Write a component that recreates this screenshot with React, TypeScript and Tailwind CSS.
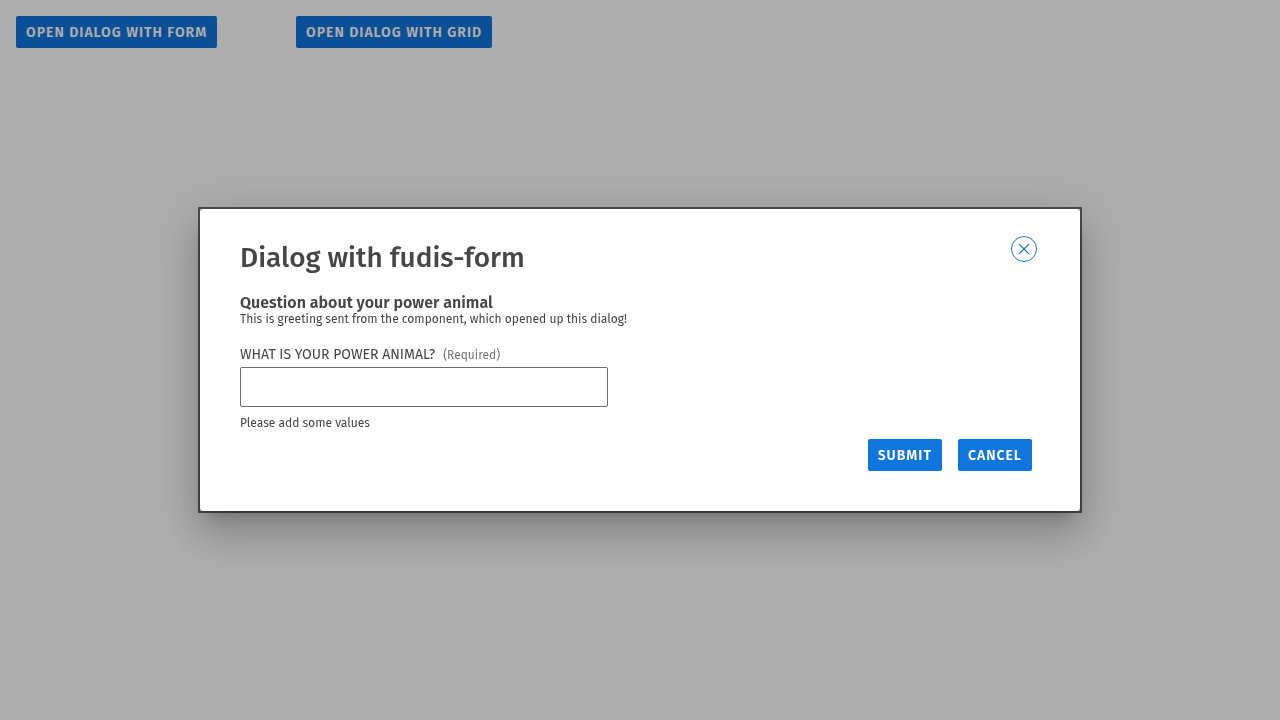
import type { ReactNode } from 'react';

function Button({ children, type = 'button' }: { children: ReactNode; type?: 'button' | 'submit' }) {
  return (
    <button
      type={type}
      className="h-8 rounded-[2px] bg-[#1175de] px-2.5 pt-0.5 text-sm font-semibold tracking-[1px] text-white uppercase"
    >
      {children}
    </button>
  );
}

function CloseIcon() {
  return (
    <svg viewBox="0 0 12 12" className="size-3" fill="none" stroke="currentColor" strokeWidth="1.3" strokeLinecap="round" aria-hidden="true">
      <path d="M1.4 1.4 10.6 10.6M10.6 1.4 1.4 10.6" />
    </svg>
  );
}

function FormDialog() {
  return (
    <div role="dialog" aria-modal="true" aria-labelledby="dialog-title" className="w-full max-w-[884px] border-2 border-[#4d4d4d]">
      <div className="rounded-[4px] bg-white pt-[27px] pb-10 pl-10 shadow-[0_11px_15px_-7px_rgba(0,0,0,0.2),0_24px_38px_3px_rgba(0,0,0,0.14),0_9px_46px_8px_rgba(0,0,0,0.12)]">
        <header className="flex items-start justify-between pr-[43px]">
          <h1 id="dialog-title" className="pt-1 text-[28px] leading-9 font-medium">
            Dialog with fudis-form
          </h1>
          <button
            type="button"
            aria-label="Close"
            className="flex size-[26px] items-center justify-center rounded-full border border-[#1175de] text-[#1175de]"
          >
            <CloseIcon />
          </button>
        </header>
        <form className="mt-[18px] pr-12" onSubmit={(event) => event.preventDefault()}>
          <h2 className="text-base leading-[18px] font-semibold">Question about your power animal</h2>
          <p className="text-xs leading-[14px]">This is greeting sent from the component, which opened up this dialog!</p>
          <label htmlFor="power-animal" className="mt-[19px] flex items-baseline gap-2 text-sm leading-5">
            <span>WHAT IS YOUR POWER ANIMAL?</span>
            <span className="text-xs leading-5 text-[#757575]">(Required)</span>
          </label>
          <input
            id="power-animal"
            type="text"
            required
            aria-describedby="power-animal-help"
            className="mt-0.5 block h-10 w-full max-w-[368px] rounded-[2px] border border-[#6b6b6b] bg-white px-3 text-sm outline-none"
          />
          <p id="power-animal-help" className="mt-2 text-xs">
            Please add some values
          </p>
          <div className="mt-2 flex justify-end gap-4">
            <Button type="submit">Submit</Button>
            <Button>Cancel</Button>
          </div>
        </form>
      </div>
    </div>
  );
}

export default function App() {
  return (
    <div className="min-h-screen bg-white font-['Fira_Sans','Open_Sans',sans-serif] text-[#464646]">
      <main className="grid grid-cols-[264px_264px] justify-items-start gap-4 p-4">
        <Button>Open dialog with form</Button>
        <Button>Open dialog with grid</Button>
      </main>
      <div className="fixed inset-0 flex items-center justify-center bg-black/32">
        <FormDialog />
      </div>
    </div>
  );
}
